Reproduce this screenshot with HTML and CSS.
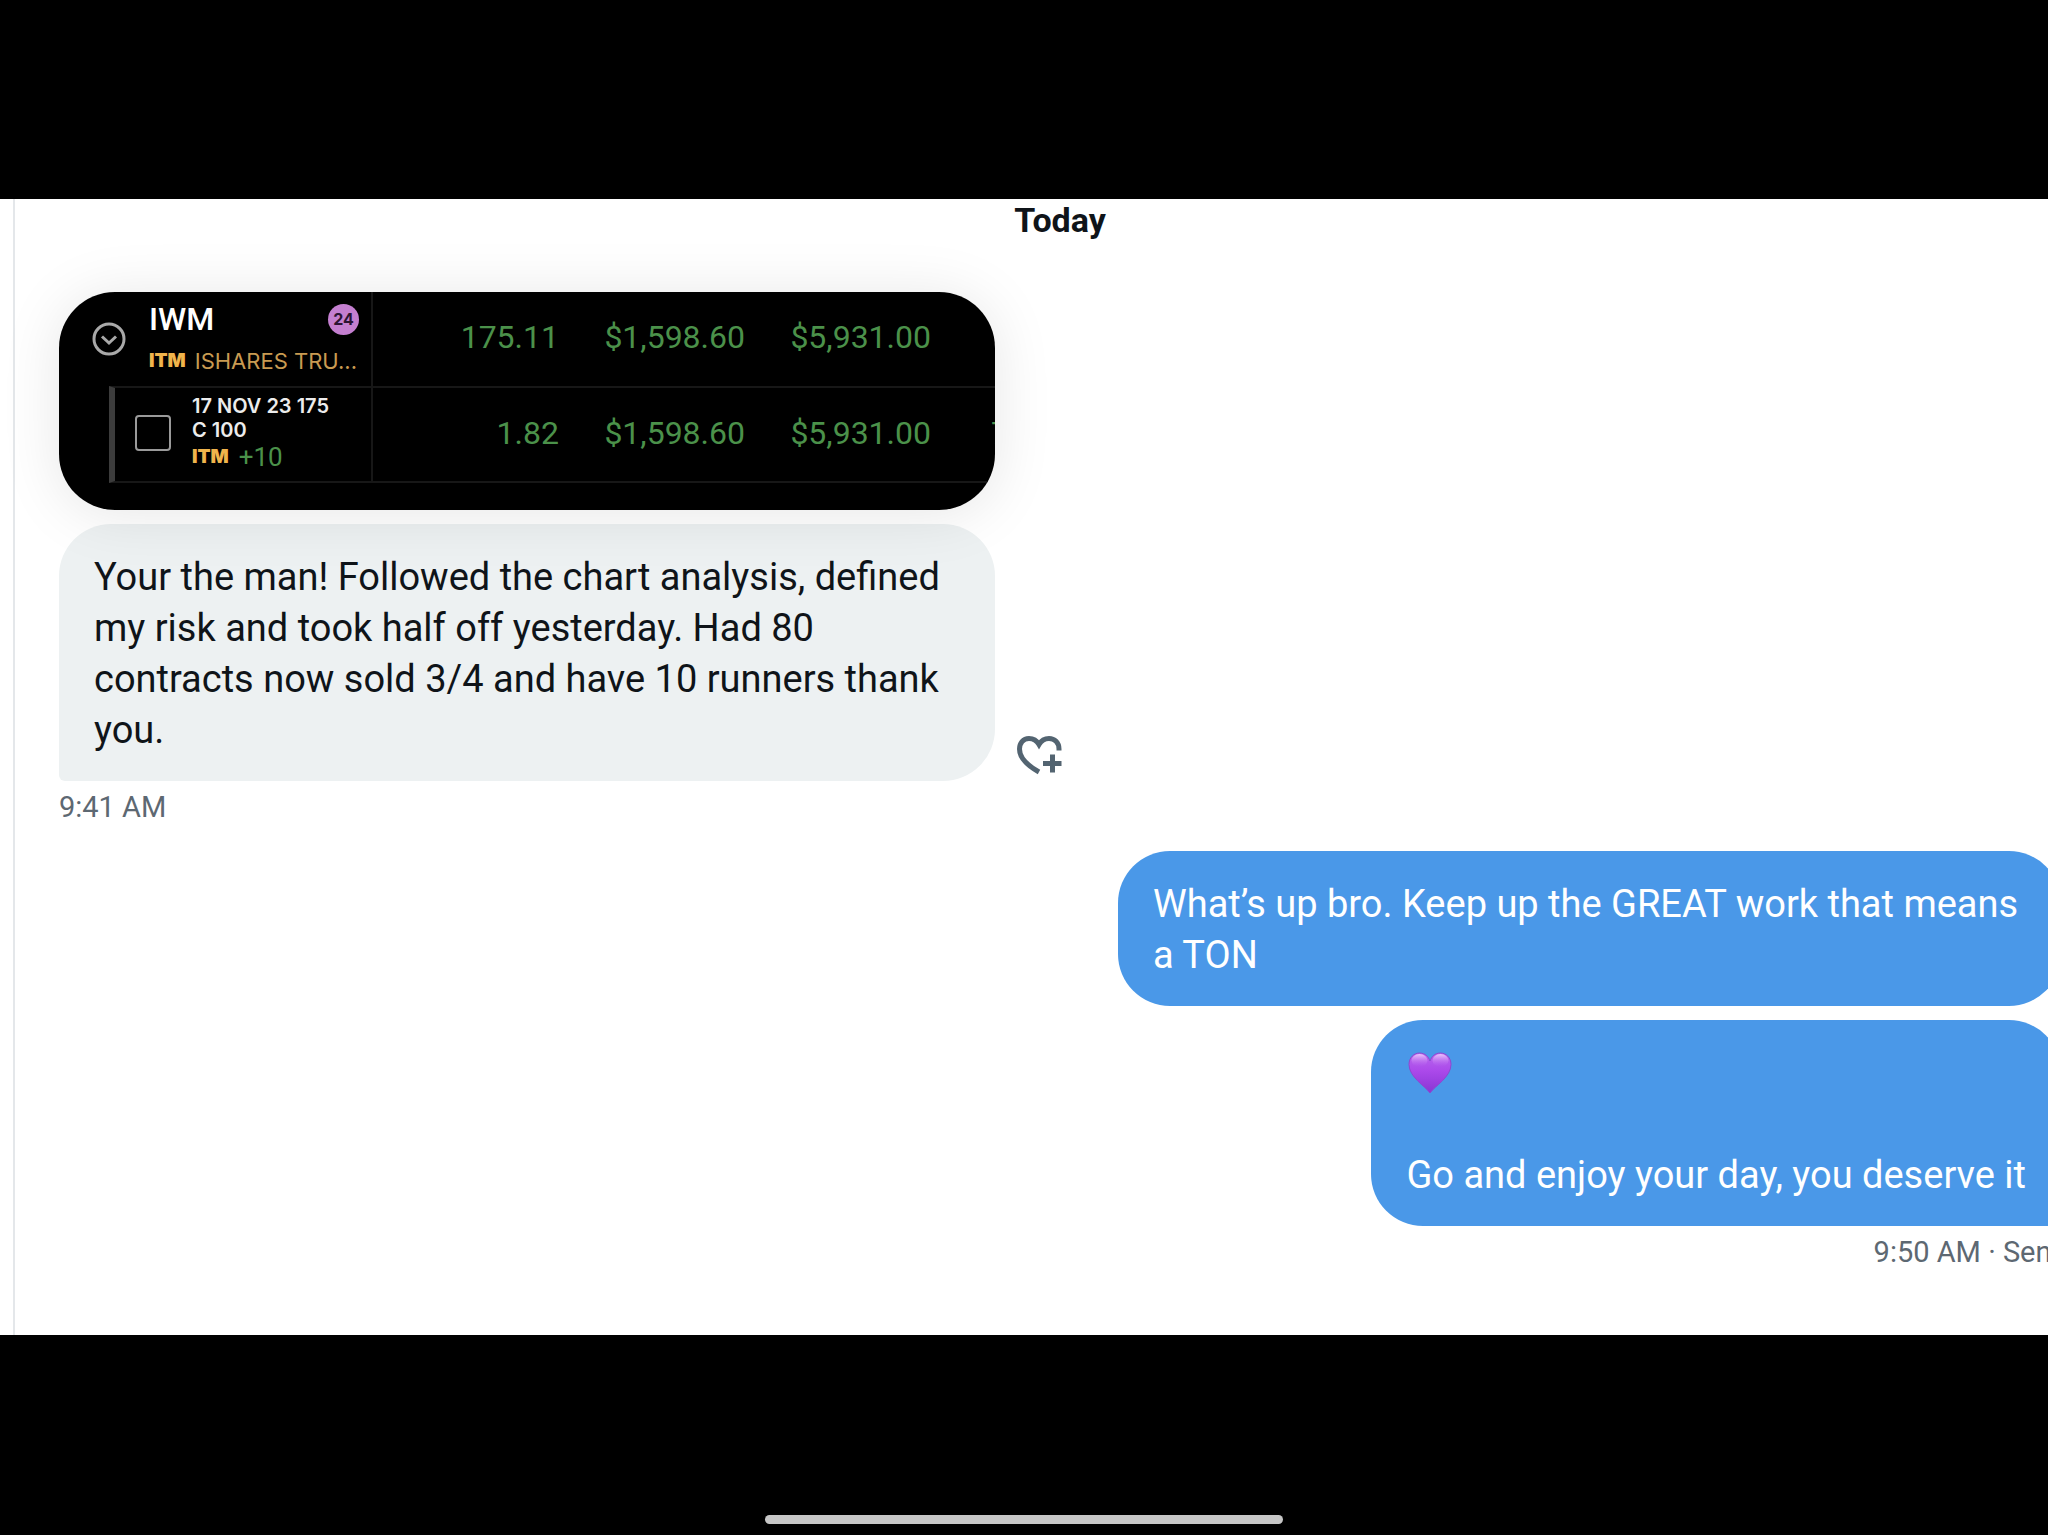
FILE: index.html
```html
<!DOCTYPE html>
<html lang="en">
<head>
  <meta charset="UTF-8" />
  <meta name="viewport" content="width=device-width, initial-scale=1.0"/>
  <title>Messages</title>
  <link rel="stylesheet" href="styles.css">
</head>
<body>
  <main class="viewer">
    <div class="chat">
      <h1 class="day">Today</h1>

      <section class="group received">
        <div class="attachment">
          <table class="positions">
            <colgroup>
              <col class="col-symbol">
              <col class="col-value">
              <col class="col-value">
              <col class="col-value">
              <col>
            </colgroup>
            <tr>
              <td class="symbol">
                <div class="holding">
                  <button class="expand" aria-label="Collapse IWM">
                    <svg viewBox="0 0 34 34" width="34" height="34">
                      <circle cx="17" cy="17" r="15" />
                      <path d="M10 14.500l7 6.500 7-6.500" />
                    </svg>
                  </button>
                  <div class="info">
                    <div class="top"><span class="ticker">IWM</span><span class="badge">24</span></div>
                    <div class="sub"><b class="itm">ITM</b><span class="company">ISHARES TRU...</span></div>
                  </div>
                </div>
              </td>
              <td>175.11</td>
              <td>$1,598.60</td>
              <td>$5,931.00</td>
              <td class="cut">7</td>
            </tr>
            <tr class="leg-row">
              <td class="symbol">
                <div class="leg">
                  <input type="checkbox" id="leg1" />
                  <label for="leg1">
                    17 NOV 23 175<br>C 100
                    <span class="qty"><b class="itm">ITM</b><span class="plus">+10</span></span>
                  </label>
                </div>
              </td>
              <td>1.82</td>
              <td>$1,598.60</td>
              <td>$5,931.00</td>
              <td class="cut">7</td>
            </tr>
          </table>
        </div>

        <div class="row">
          <p class="bubble">Your the man! Followed the chart analysis, defined my risk and took half off yesterday. Had 80 contracts now sold 3/4 and have 10 runners thank you.</p>
          <button class="react" aria-label="Add reaction">
            <svg viewBox="0 0 45 39" width="45" height="39">
              <path d="M42 14.500V13C42 6.500 37.500 2.500 32 2.500c-4.500 0-8 2.500-10 6-2-3.500-5.500-6-10-6C6 2.500 2.500 7.500 2.500 13 2.500 21 9.500 29 22 36" />
              <path d="M26 27.500h18.500M35.500 18.500v18" />
            </svg>
          </button>
        </div>
        <time class="stamp">9:41 AM</time>
      </section>

      <section class="group sent">
        <p class="bubble">What’s up bro. Keep up the GREAT work that means a TON</p>
        <div class="bubble last">
          <svg class="heart" viewBox="0 0 44 42" width="44" height="42" role="img" aria-label="Purple heart">
            <defs>
              <linearGradient id="purple" x1="0" y1="0" x2="0" y2="1">
                <stop offset="0" stop-color="#b768ee" />
                <stop offset="0.45" stop-color="#ab49ea" />
                <stop offset="1" stop-color="#8a35d3" />
              </linearGradient>
              <linearGradient id="shine" x1="0" y1="0" x2="0" y2="1">
                <stop offset="0" stop-color="#ecc4fb" />
                <stop offset="1" stop-color="#b35cee" stop-opacity="0" />
              </linearGradient>
            </defs>
            <path fill="url(#purple)" stroke="#8d49cf" d="M22 41C17 34 1 25 1 12.500 1 5.500 6 1 11.500 1 17 1 20.500 4.500 22 9c1.500-4.500 5-8 10.500-8C38 1 43 5.500 43 12.500 43 25 27 34 22 41z" />
            <ellipse fill="url(#shine)" cx="11.500" cy="8.500" rx="8" ry="6.500" />
            <ellipse fill="url(#shine)" cx="32.500" cy="8.500" rx="8" ry="6.500" />
          </svg>
          <p>Go and enjoy your day, you deserve it</p>
        </div>
        <div class="stamp"><time>9:50 AM</time> · Sent</div>
      </section>
    </div>
  </main>
  <footer class="home"><div class="indicator"></div></footer>
</body>
</html>
```
FILE: styles.css
```css
* {
  box-sizing: border-box;
}

body {
  display: flex;
  flex-direction: column;
  min-height: 100vh;
  margin: 0;
  padding-top: 199px;
  background: #000;
  color: #0f1419;
  font-family: Roboto, Arial, sans-serif;
}

h1, p {
  margin: 0;
}

button {
  padding: 0;
  border: none;
  background: none;
}

svg {
  display: block;
}

/* the conversation runs a little past the right edge of the screen */
.viewer {
  display: flex;
  flex: 1;
  padding-left: 13px;
  background: #fff;
  overflow: hidden;
}

.chat {
  flex: 0 0 auto;
  width: calc(100% + 58px);
  padding: 0 45px 0 44px;
  border-left: 2px solid #e4e7ea;
}

.day {
  font-size: 34px;
  line-height: 42px;
  text-align: center;
}

.group {
  display: flex;
  flex-direction: column;
}

.received {
  align-items: flex-start;
  padding-top: 51px;
}

.sent {
  align-items: flex-end;
  padding-top: 28px;
}

/* attached screenshot */
.attachment {
  position: relative;
  z-index: 1;
  width: 936px;
  height: 218px;
  margin-bottom: 14px;
  border-radius: 56px;
  background: #000;
  box-shadow: 0 4px 60px rgba(0, 0, 0, 0.1);
  overflow: hidden;
}

.positions {
  width: 100%;
  table-layout: fixed;
  border-collapse: separate;
  border-spacing: 0;
  color: #4b914a;
  font-size: 32px;
}

.col-symbol {
  width: 314px;
}

.col-value {
  width: 186px;
}

.positions td {
  height: 94px;
  padding: 0 0 4px;
  text-align: right;
}

.positions td.symbol {
  padding-bottom: 0;
  border-right: 2px solid #171717;
  text-align: left;
}

.positions td.cut {
  padding-left: 60px;
  text-align: left;
}

.leg-row td {
  height: 97px;
  border-top: 2px solid #171717;
  border-bottom: 2px solid #171717;
}

.leg-row td.symbol {
  padding-left: 50px;
  border-top: none;
  border-bottom: none;
}

.holding {
  display: flex;
  align-items: center;
  gap: 23px;
  padding: 0 12px 0 33px;
}

.expand svg {
  fill: none;
  stroke: #a9a9a9;
  stroke-width: 3;
}

.info {
  flex: 1;
}

.top {
  display: flex;
  justify-content: space-between;
  align-items: center;
}

.ticker {
  color: #fff;
  font-size: 32px;
  font-weight: 500;
  line-height: 36px;
}

.badge {
  width: 31px;
  height: 31px;
  border-radius: 50%;
  background: #c47fd0;
  color: #2b1433;
  font: 700 16px/31px Inter, sans-serif;
  text-align: center;
}

.sub {
  display: flex;
  align-items: center;
  gap: 9px;
  margin-top: 8px;
  white-space: nowrap;
}

.itm {
  color: #f0b44c;
  font: 900 19px/24px Inter, sans-serif;
}

.company {
  color: #c99b52;
  font: 400 22px/32px Inter, sans-serif;
}

.leg {
  display: flex;
  align-items: center;
  gap: 21px;
  height: 97px;
  padding: 0 0 3px 20px;
  border: solid #171717;
  border-width: 2px 0;
  border-left: 6px solid #3c3c3c;
}

.leg input {
  appearance: none;
  width: 36px;
  height: 36px;
  margin: 0;
  border: 2px solid #9a9a9a;
  border-radius: 4px;
}

.leg label {
  color: #ececec;
  font: 600 20px/24px Inter, sans-serif;
}

.qty {
  display: flex;
  align-items: center;
  gap: 10px;
}

.plus {
  color: #4b914a;
  font: 400 26px/30px Roboto, sans-serif;
}

/* messages */
.row {
  display: flex;
  align-items: flex-end;
  gap: 22px;
}

.bubble {
  max-width: 943px;
  padding: 28px 35px 25px;
  border-radius: 52px;
  font-size: 38px;
  line-height: 51px;
}

.received .bubble {
  width: 936px;
  border-bottom-left-radius: 6px;
  background: #edf1f2;
}

.sent .bubble {
  background: #4a98e8;
  color: #fff;
}

.sent .last {
  margin-top: 14px;
  border-bottom-right-radius: 6px;
}

.heart {
  margin: 4px 2px 56px;
}

.react {
  margin-bottom: 6px;
}

.react svg {
  fill: none;
  stroke: #536471;
  stroke-width: 5;
}

.stamp {
  padding-top: 10px;
  color: #5d6872;
  font-size: 29px;
  line-height: 32px;
}

.home {
  display: flex;
  justify-content: center;
  align-items: flex-end;
  height: 200px;
  padding-bottom: 11px;
}

.indicator {
  width: 518px;
  height: 9px;
  border-radius: 5px;
  background: #c6c6c6;
}
```
